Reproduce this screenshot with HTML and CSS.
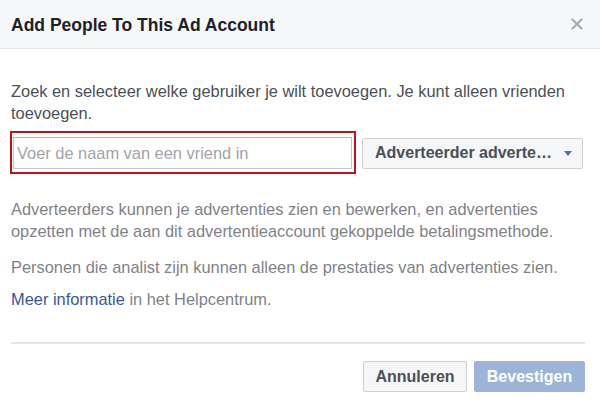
FILE: index.html
```html
<!DOCTYPE html>
<html lang="nl">
<head>
<meta charset="utf-8">
<title>Add People To This Ad Account</title>
<link rel="stylesheet" href="styles.css">
</head>
<body>
<div class="dialog">
  <header class="hd">
    <h1 class="title">Add People To This Ad Account</h1>
    <button class="close" aria-label="Sluiten">
      <svg width="12" height="12" viewBox="0 0 12 12"><path d="M1.5 1.5 L10.5 10.5 M10.5 1.5 L1.5 10.5" stroke="#a7a9ac" stroke-width="2.2" stroke-linecap="round" fill="none"/></svg>
    </button>
  </header>
  <div class="bd">
    <p class="intro">Zoek en selecteer welke gebruiker je wilt toevoegen. Je kunt alleen vrienden toevoegen.</p>
    <div class="pick-row">
      <div class="hl"><input class="field" type="text" placeholder="Voer de naam van een vriend in"></div>
      <button class="dd"><span class="dd-label">Adverteerder adverte…</span><span class="caret"></span></button>
    </div>
    <p class="note note-roles">Adverteerders kunnen je advertenties zien en bewerken, en advertenties opzetten met de aan dit advertentieaccount gekoppelde betalingsmethode.</p>
    <p class="note note-analyst">Personen die analist zijn kunnen alleen de prestaties van advertenties zien.</p>
    <p class="note note-help"><a class="link" href="#">Meer informatie</a> in het Helpcentrum.</p>
  </div>
  <footer class="ft">
    <button class="btn btn-cancel">Annuleren</button>
    <button class="btn btn-confirm">Bevestigen</button>
  </footer>
</div>
</body>
</html>
```

FILE: styles.css
```css
* { box-sizing: border-box; }
html, body { margin: 0; padding: 0; background: #fff; }
body {
  font-family: "Liberation Sans", Arial, Helvetica, sans-serif;
  width: 600px;
  height: 405px;
  overflow: hidden;
}
.dialog { width: 600px; }
.hd {
  height: 49px;
  background: #f6f7f9;
  border-bottom: 1px solid #e5e5e5;
  display: flex;
  align-items: center;
  justify-content: space-between;
  padding: 0 17px 0 11px;
}
.title {
  margin: 0;
  font-size: 17.5px;
  font-weight: bold;
  color: #1d2129;
  line-height: 22px;
  padding-top: 1px;
}
.close {
  border: 0;
  background: none;
  padding: 0;
  width: 12px;
  height: 12px;
  display: flex;
  cursor: pointer;
}
.bd { padding: 31px 12px 0 11px; }
.intro {
  margin: 0;
  font-size: 16.4px;
  line-height: 22px;
  color: #4b4f56;
}
.pick-row {
  display: flex;
  align-items: center;
  margin-top: 7px;
  margin-left: -1px;
}
.hl {
  border: 2px solid #be1319;
  padding: 4px 2px 3px 1px;
  width: 346px;
  flex: none;
}
.field {
  display: block;
  width: 339px;
  height: 32px;
  border: 1px solid #bdc7d8;
  border-top-color: #a9b5cc;
  padding: 0 3px;
  font-family: inherit;
  font-size: 16.4px;
  color: #1d2129;
  outline: none;
}
.field::placeholder { color: #a0a3a8; }
.dd {
  margin-left: 6px;
  width: 221px;
  height: 31px;
  margin-top: 1px;
  background: #f5f6f7;
  border: 1px solid #ced0d4;
  border-radius: 2px;
  display: flex;
  align-items: center;
  padding: 0 10px 0 12px;
  font-family: inherit;
  font-size: 16px;
  font-weight: bold;
  color: #4b4f56;
}
.dd-label { flex: 1; text-align: left; white-space: nowrap; }
.caret {
  width: 0;
  height: 0;
  border-left: 4.5px solid transparent;
  border-right: 4.5px solid transparent;
  border-top: 5px solid #4b6fae;
}
.note {
  margin: 0;
  font-size: 16.4px;
  line-height: 22px;
  color: #7f8288;
}
.note-roles { margin-top: 24px; }
.note-analyst { margin-top: 14px; }
.note-help { margin-top: 10px; }
.link { color: #365899; text-decoration: none; }
.ft {
  margin: 32px 15px 0 11px;
  border-top: 2px solid #e3e4e6;
  padding-top: 17px;
  display: flex;
  justify-content: flex-end;
  gap: 7px;
}
.btn {
  height: 31px;
  border-radius: 2px;
  font-family: inherit;
  font-size: 16px;
  font-weight: bold;
  padding: 0 11px;
}
.btn-cancel {
  width: 104px;
  background: #f5f6f7;
  border: 1px solid #ced0d4;
  color: #4b4f56;
}
.btn-confirm {
  width: 111px;
  background: #9cb4d8;
  border: 1px solid #9cb4d8;
  color: #fff;
}
```
